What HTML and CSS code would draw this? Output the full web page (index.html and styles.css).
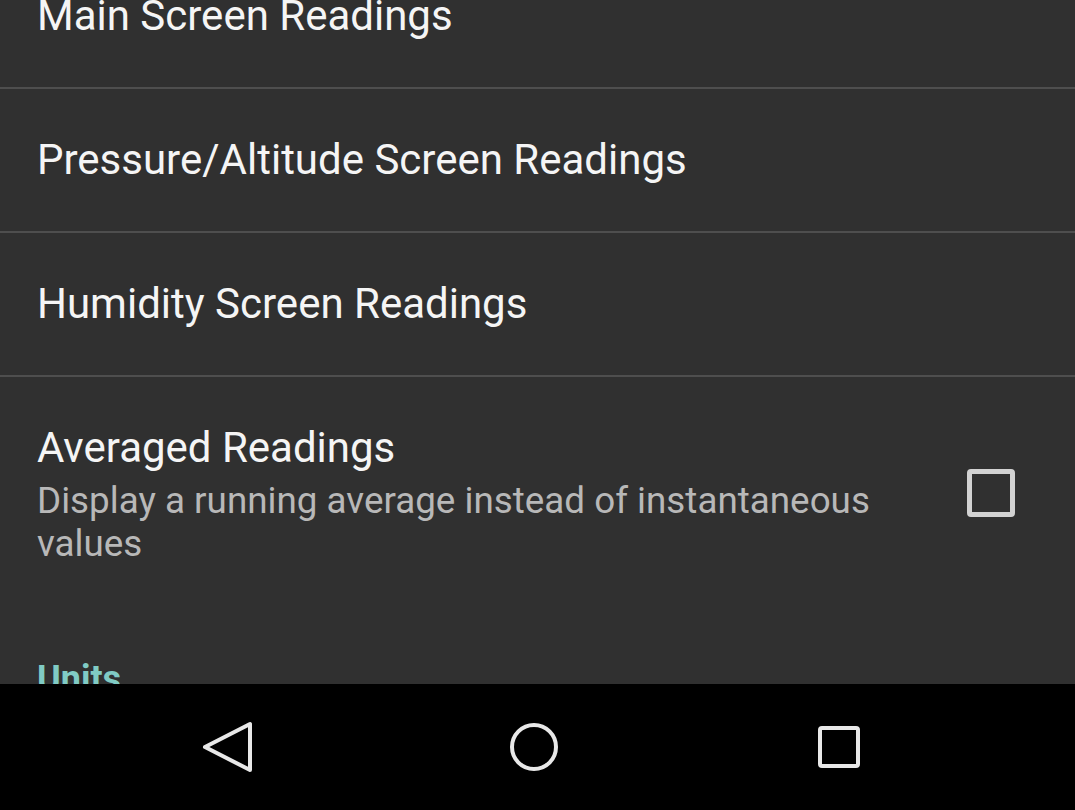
FILE: index.html
```html
<!DOCTYPE html>
<html>
<head>
<meta charset="utf-8">
<link rel="stylesheet" href="styles.css">
</head>
<body>
<div class="screen">
  <div class="list">
    <div class="row"><span class="title">Main Screen Readings</span></div>
    <div class="divider"></div>
    <div class="row"><span class="title">Pressure/Altitude Screen Readings</span></div>
    <div class="divider"></div>
    <div class="row"><span class="title">Humidity Screen Readings</span></div>
    <div class="divider"></div>
    <div class="row row-check">
      <div class="texts">
        <div class="title">Averaged Readings</div>
        <div class="summary">Display a running average instead of instantaneous values</div>
      </div>
      <div class="checkbox"></div>
    </div>
    <div class="category">Units</div>
  </div>
  <div class="navbar">
    <svg class="nav-icon" width="60" height="60" viewBox="0 0 60 60">
      <path d="M52 7 L52 53 L7 30 Z" fill="none" stroke="#e8e8e8" stroke-width="4" stroke-linejoin="round"/>
    </svg>
    <svg class="nav-icon" width="60" height="60" viewBox="0 0 60 60">
      <circle cx="30" cy="30" r="22" fill="none" stroke="#e8e8e8" stroke-width="4"/>
    </svg>
    <svg class="nav-icon" width="60" height="60" viewBox="0 0 60 60">
      <rect x="11" y="11" width="38" height="38" rx="2" fill="none" stroke="#e8e8e8" stroke-width="4"/>
    </svg>
  </div>
</div>
</body>
</html>
```

FILE: styles.css
```css
html, body {
  margin: 0;
  padding: 0;
  background: #303030;
}
.screen {
  width: 1075px;
  height: 810px;
  display: flex;
  flex-direction: column;
  overflow: hidden;
  font-family: Roboto, "Noto Sans", sans-serif;
}
.list {
  flex: 1;
  overflow: hidden;
  background: #303030;
}
.list > :first-child {
  margin-top: -55px;
}
.row {
  height: 142px;
  display: flex;
  align-items: center;
  padding: 0 37px;
}
.title {
  color: #f5f5f5;
  font-size: 42px;
  line-height: 48px;
}
.divider {
  height: 2px;
  background: #4e4e4e;
}
.row-check {
  height: auto;
  padding-top: 47px;
  padding-bottom: 0;
}
.texts {
  flex: 1;
  padding-right: 60px;
}
.summary {
  color: #b8b8b8;
  font-size: 36.8px;
  line-height: 43px;
  margin-top: 7px;
}
.checkbox {
  width: 38px;
  height: 38px;
  border: 5px solid #d2d2d2;
  border-radius: 4px;
  margin-right: 23px;
  margin-bottom: 4px;
}
.category {
  color: #80cbc4;
  font-size: 36px;
  line-height: 43px;
  font-weight: 700;
  padding: 93px 37px 0;
}
.navbar {
  height: 126px;
  flex: none;
  background: #000;
  display: flex;
  align-items: center;
  justify-content: space-between;
  padding: 0 206px 0 198px;
}
.nav-icon {
  display: block;
}
```
